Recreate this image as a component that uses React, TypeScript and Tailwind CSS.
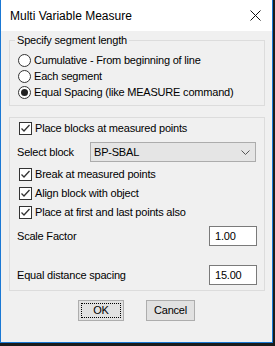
import React from "react";

const BLUE = "#1a78d4";

function CloseIcon() {
  return (
    <svg width="11" height="11" viewBox="0 0 11 11" fill="none" stroke="#111" strokeWidth="1">
      <line x1="0.5" y1="0.5" x2="10.5" y2="10.5" />
      <line x1="10.5" y1="0.5" x2="0.5" y2="10.5" />
    </svg>
  );
}

function Radio({ label, checked }: { label: string; checked?: boolean }) {
  return (
    <div className="flex items-center h-[16px] ml-[1px]">
      <span className="w-[13px] h-[13px] rounded-full border border-[#333] bg-white flex items-center justify-center shrink-0">
        {checked && <span className="w-[7px] h-[7px] rounded-full bg-[#222]" />}
      </span>
      <span className="ml-[3px] whitespace-nowrap">{label}</span>
    </div>
  );
}

function Check({ label, className = "" }: { label: string; className?: string }) {
  return (
    <div className={`flex items-center ml-[2px] ${className}`}>
      <span className="w-[13px] h-[13px] border border-[#333] bg-white flex items-center justify-center shrink-0">
        <svg width="11" height="11" viewBox="0 0 11 11" fill="none" stroke="#333" strokeWidth="1.3">
          <polyline points="1.5,5.5 4,8 9.5,2" />
        </svg>
      </span>
      <span className="ml-[3px] whitespace-nowrap">{label}</span>
    </div>
  );
}

function TextBox({ value }: { value: string }) {
  return (
    <div className="w-[48px] h-[20px] bg-white border border-[#7a7a7a] flex items-center pl-[5px]">{value}</div>
  );
}

export default function App() {
  return (
    <div className="w-[275px] h-[346px] bg-[#1b1b1b]">
      <div
        className="w-[273px] h-[343px] bg-[#f0f0f0] border-x border-b flex flex-col text-black text-[11px] tracking-[-0.2px] font-['Liberation_Sans',Arial,sans-serif]"
        style={{ borderColor: BLUE }}
      >
        {/* Title bar */}
        <div className="h-[31px] bg-white flex items-center justify-between pl-[9px] pr-[11px] shrink-0">
          <span className="text-[12px] tracking-normal">Multi Variable Measure</span>
          <CloseIcon />
        </div>

        <div className="flex-1 pl-[8px] pr-[7px] pt-[1px] flex flex-col">
          {/* Segment length group */}
          <fieldset className="border border-[#dcdcdc] pl-[7px] pb-[5px]">
            <legend className="-ml-[2px] px-[2px] leading-[16px]">Specify segment length</legend>
            <div className="pt-[4px]">
              <Radio label="Cumulative - From beginning of line" />
              <Radio label="Each segment" />
              <Radio label="Equal Spacing (like MEASURE command)" checked />
            </div>
          </fieldset>

          {/* Block options */}
          <div className="mt-[11px] border border-[#dcdcdc] px-[7px] pt-[2px] pb-[5px]">
            <Check label="Place blocks at measured points" className="h-[16px]" />
            <div className="flex items-center mt-[6px]">
              <span className="w-[73px] whitespace-nowrap">Select block</span>
              <div className="w-[166px] h-[20px] bg-[#e5e5e5] border border-[#acacac] flex items-center justify-between pl-[3px] pr-[5px]">
                <span>BP-SBAL</span>
                <svg width="9" height="5" viewBox="0 0 9 5" fill="none" stroke="#555" strokeWidth="1">
                  <polyline points="0.5,0.5 4.5,4.5 8.5,0.5" />
                </svg>
              </div>
            </div>
            <Check label="Break at measured points" className="h-[19px] mt-[3px]" />
            <Check label="Align block with object" className="h-[19px]" />
            <Check label="Place at first and last points also" className="h-[19px]" />
            <div className="flex items-center justify-between mt-[4px]">
              <span>Scale Factor</span>
              <TextBox value="1.00" />
            </div>
            <div className="flex items-center justify-between mt-[19px]">
              <span>Equal distance spacing</span>
              <TextBox value="15.00" />
            </div>
          </div>

          {/* Buttons */}
          <div className="flex justify-center gap-[22px] mt-[9px] pr-[1px]">
            <button className="w-[46px] h-[21px] bg-[#e1e1e1] border border-[#adadad] p-[2px]">
              <span className="w-full h-full flex items-center justify-center outline outline-1 outline-dotted outline-black -outline-offset-1">
                OK
              </span>
            </button>
            <button className="w-[49px] h-[21px] bg-[#e1e1e1] border border-[#adadad] flex items-center justify-center">
              Cancel
            </button>
          </div>
        </div>
      </div>
    </div>
  );
}
